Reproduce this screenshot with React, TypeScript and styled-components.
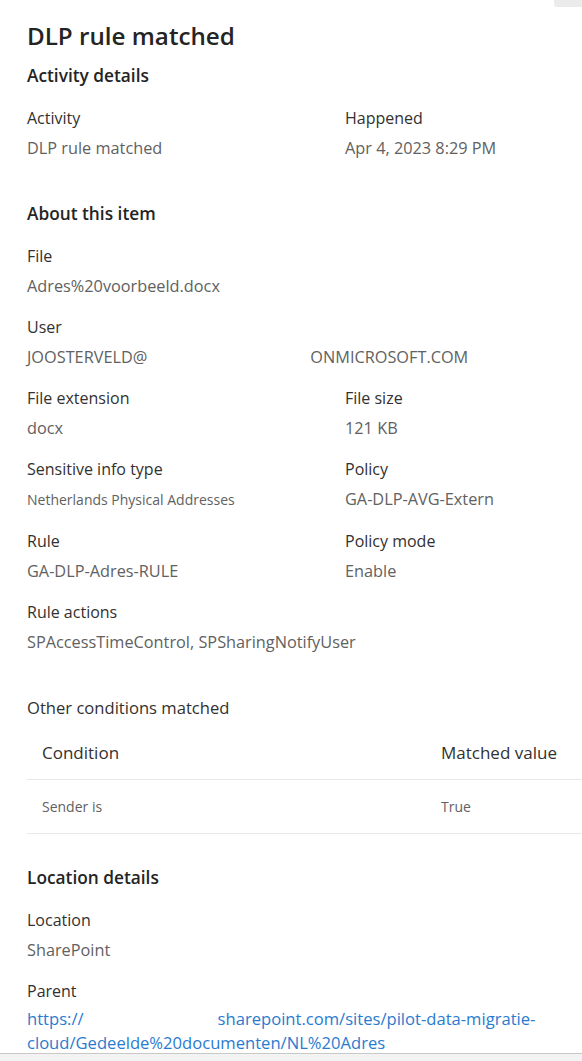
import styled, { createGlobalStyle } from 'styled-components'

const GlobalStyle = createGlobalStyle`
  html, body {
    margin: 0;
    padding: 0;
    background: #ffffff;
  }
  body {
    font-family: 'Open Sans', 'Noto Sans', 'Liberation Sans', sans-serif;
    -webkit-font-smoothing: antialiased;
  }
`

const Page = styled.div`
  position: relative;
  display: flex;
  flex-direction: column;
  height: 100vh;
  overflow: hidden;
  background: #ffffff;
`

const ScrollCorner = styled.div`
  position: absolute;
  top: 0;
  right: 0;
  width: 28px;
  height: 7px;
  background: #ebebeb;
  border-bottom-left-radius: 3px;
`

const Panel = styled.div`
  flex: 1;
  overflow: hidden;
  padding: 20px 0 0 27px;
`

const Title = styled.h1`
  margin: 0;
  font-size: 24.2px;
  line-height: 32px;
  font-weight: 600;
  color: #242424;
`

const SectionTitle = styled.h2<{ $top: number }>`
  margin: ${(p) => p.$top}px 0 0;
  font-size: 17.3px;
  line-height: 24px;
  font-weight: 600;
  color: #242424;
`

const Fields = styled.div`
  display: grid;
  grid-template-columns: 318px 1fr;
  row-gap: 21px;
  margin-top: 20px;
`

const Field = styled.div<{ $wide?: boolean }>`
  display: flex;
  flex-direction: column;
  gap: 10px;
  grid-column: ${(p) => (p.$wide ? '1 / -1' : 'auto')};
`

const Label = styled.div`
  font-size: 16px;
  line-height: 20px;
  font-weight: 500;
  color: #323130;
  white-space: nowrap;
`

const Value = styled.div<{ $small?: boolean }>`
  font-size: ${(p) => (p.$small ? '14px' : '16.3px')};
  line-height: 20px;
  color: #616161;
  white-space: nowrap;
  padding-top: ${(p) => (p.$small ? '1px' : '0')};
`

const Redacted = styled.span<{ $w: number }>`
  display: inline-block;
  width: ${(p) => p.$w}px;
`

const SubHeading = styled.div`
  margin-top: 46px;
  font-size: 16.6px;
  line-height: 20px;
  color: #323130;
`

const Table = styled.div`
  margin-top: 7px;
  margin-right: -20px;
`

const TableRow = styled.div<{ $head?: boolean }>`
  display: grid;
  grid-template-columns: 399px 1fr;
  height: ${(p) => (p.$head ? '54px' : '53px')};
  align-items: center;
  border-bottom: 1px solid #e8e8e8;
  font-size: ${(p) => (p.$head ? '17px' : '14px')};
  color: ${(p) => (p.$head ? '#323130' : '#616161')};
  padding-left: 15px;
`

const Cell = styled.span`
  white-space: nowrap;
`

const LinkValue = styled.a`
  display: block;
  font-size: 16.6px;
  line-height: 24px;
  color: #2a7bd0;
  text-decoration: none;
  margin-top: -4px;
`

const Footer = styled.div`
  height: 7px;
  flex-shrink: 0;
  border-top: 1px solid #c8c8c8;
  background: #f3f3f3;
`

function App() {
  return (
    <Page>
      <GlobalStyle />
      <ScrollCorner />
      <Panel>
        <Title>DLP rule matched</Title>
        <SectionTitle $top={12}>Activity details</SectionTitle>
        <Fields>
          <Field>
            <Label>Activity</Label>
            <Value>DLP rule matched</Value>
          </Field>
          <Field>
            <Label>Happened</Label>
            <Value>Apr 4, 2023 8:29 PM</Value>
          </Field>
        </Fields>

        <SectionTitle $top={44}>About this item</SectionTitle>
        <Fields>
          <Field $wide>
            <Label>File</Label>
            <Value>Adres%20voorbeeld.docx</Value>
          </Field>
          <Field $wide>
            <Label>User</Label>
            <Value>
              JOOSTERVELD@
              <Redacted $w={163} />
              ONMICROSOFT.COM
            </Value>
          </Field>
          <Field>
            <Label>File extension</Label>
            <Value>docx</Value>
          </Field>
          <Field>
            <Label>File size</Label>
            <Value>121 KB</Value>
          </Field>
          <Field>
            <Label>Sensitive info type</Label>
            <Value $small>Netherlands Physical Addresses</Value>
          </Field>
          <Field>
            <Label>Policy</Label>
            <Value>GA-DLP-AVG-Extern</Value>
          </Field>
          <Field>
            <Label>Rule</Label>
            <Value>GA-DLP-Adres-RULE</Value>
          </Field>
          <Field>
            <Label>Policy mode</Label>
            <Value>Enable</Value>
          </Field>
          <Field $wide>
            <Label>Rule actions</Label>
            <Value>SPAccessTimeControl, SPSharingNotifyUser</Value>
          </Field>
        </Fields>

        <SubHeading>Other conditions matched</SubHeading>
        <Table>
          <TableRow $head>
            <Cell>Condition</Cell>
            <Cell>Matched value</Cell>
          </TableRow>
          <TableRow>
            <Cell>Sender is</Cell>
            <Cell>True</Cell>
          </TableRow>
        </Table>

        <SectionTitle $top={32}>Location details</SectionTitle>
        <Fields>
          <Field $wide>
            <Label>Location</Label>
            <Value>SharePoint</Value>
          </Field>
          <Field $wide>
            <Label>Parent</Label>
            <LinkValue href="#">
              https://
              <Redacted $w={134} />
              sharepoint.com/sites/pilot-data-migratie-
              <br />
              cloud/Gedeelde%20documenten/NL%20Adres
            </LinkValue>
          </Field>
        </Fields>
      </Panel>
      <Footer />
    </Page>
  )
}

export default App
